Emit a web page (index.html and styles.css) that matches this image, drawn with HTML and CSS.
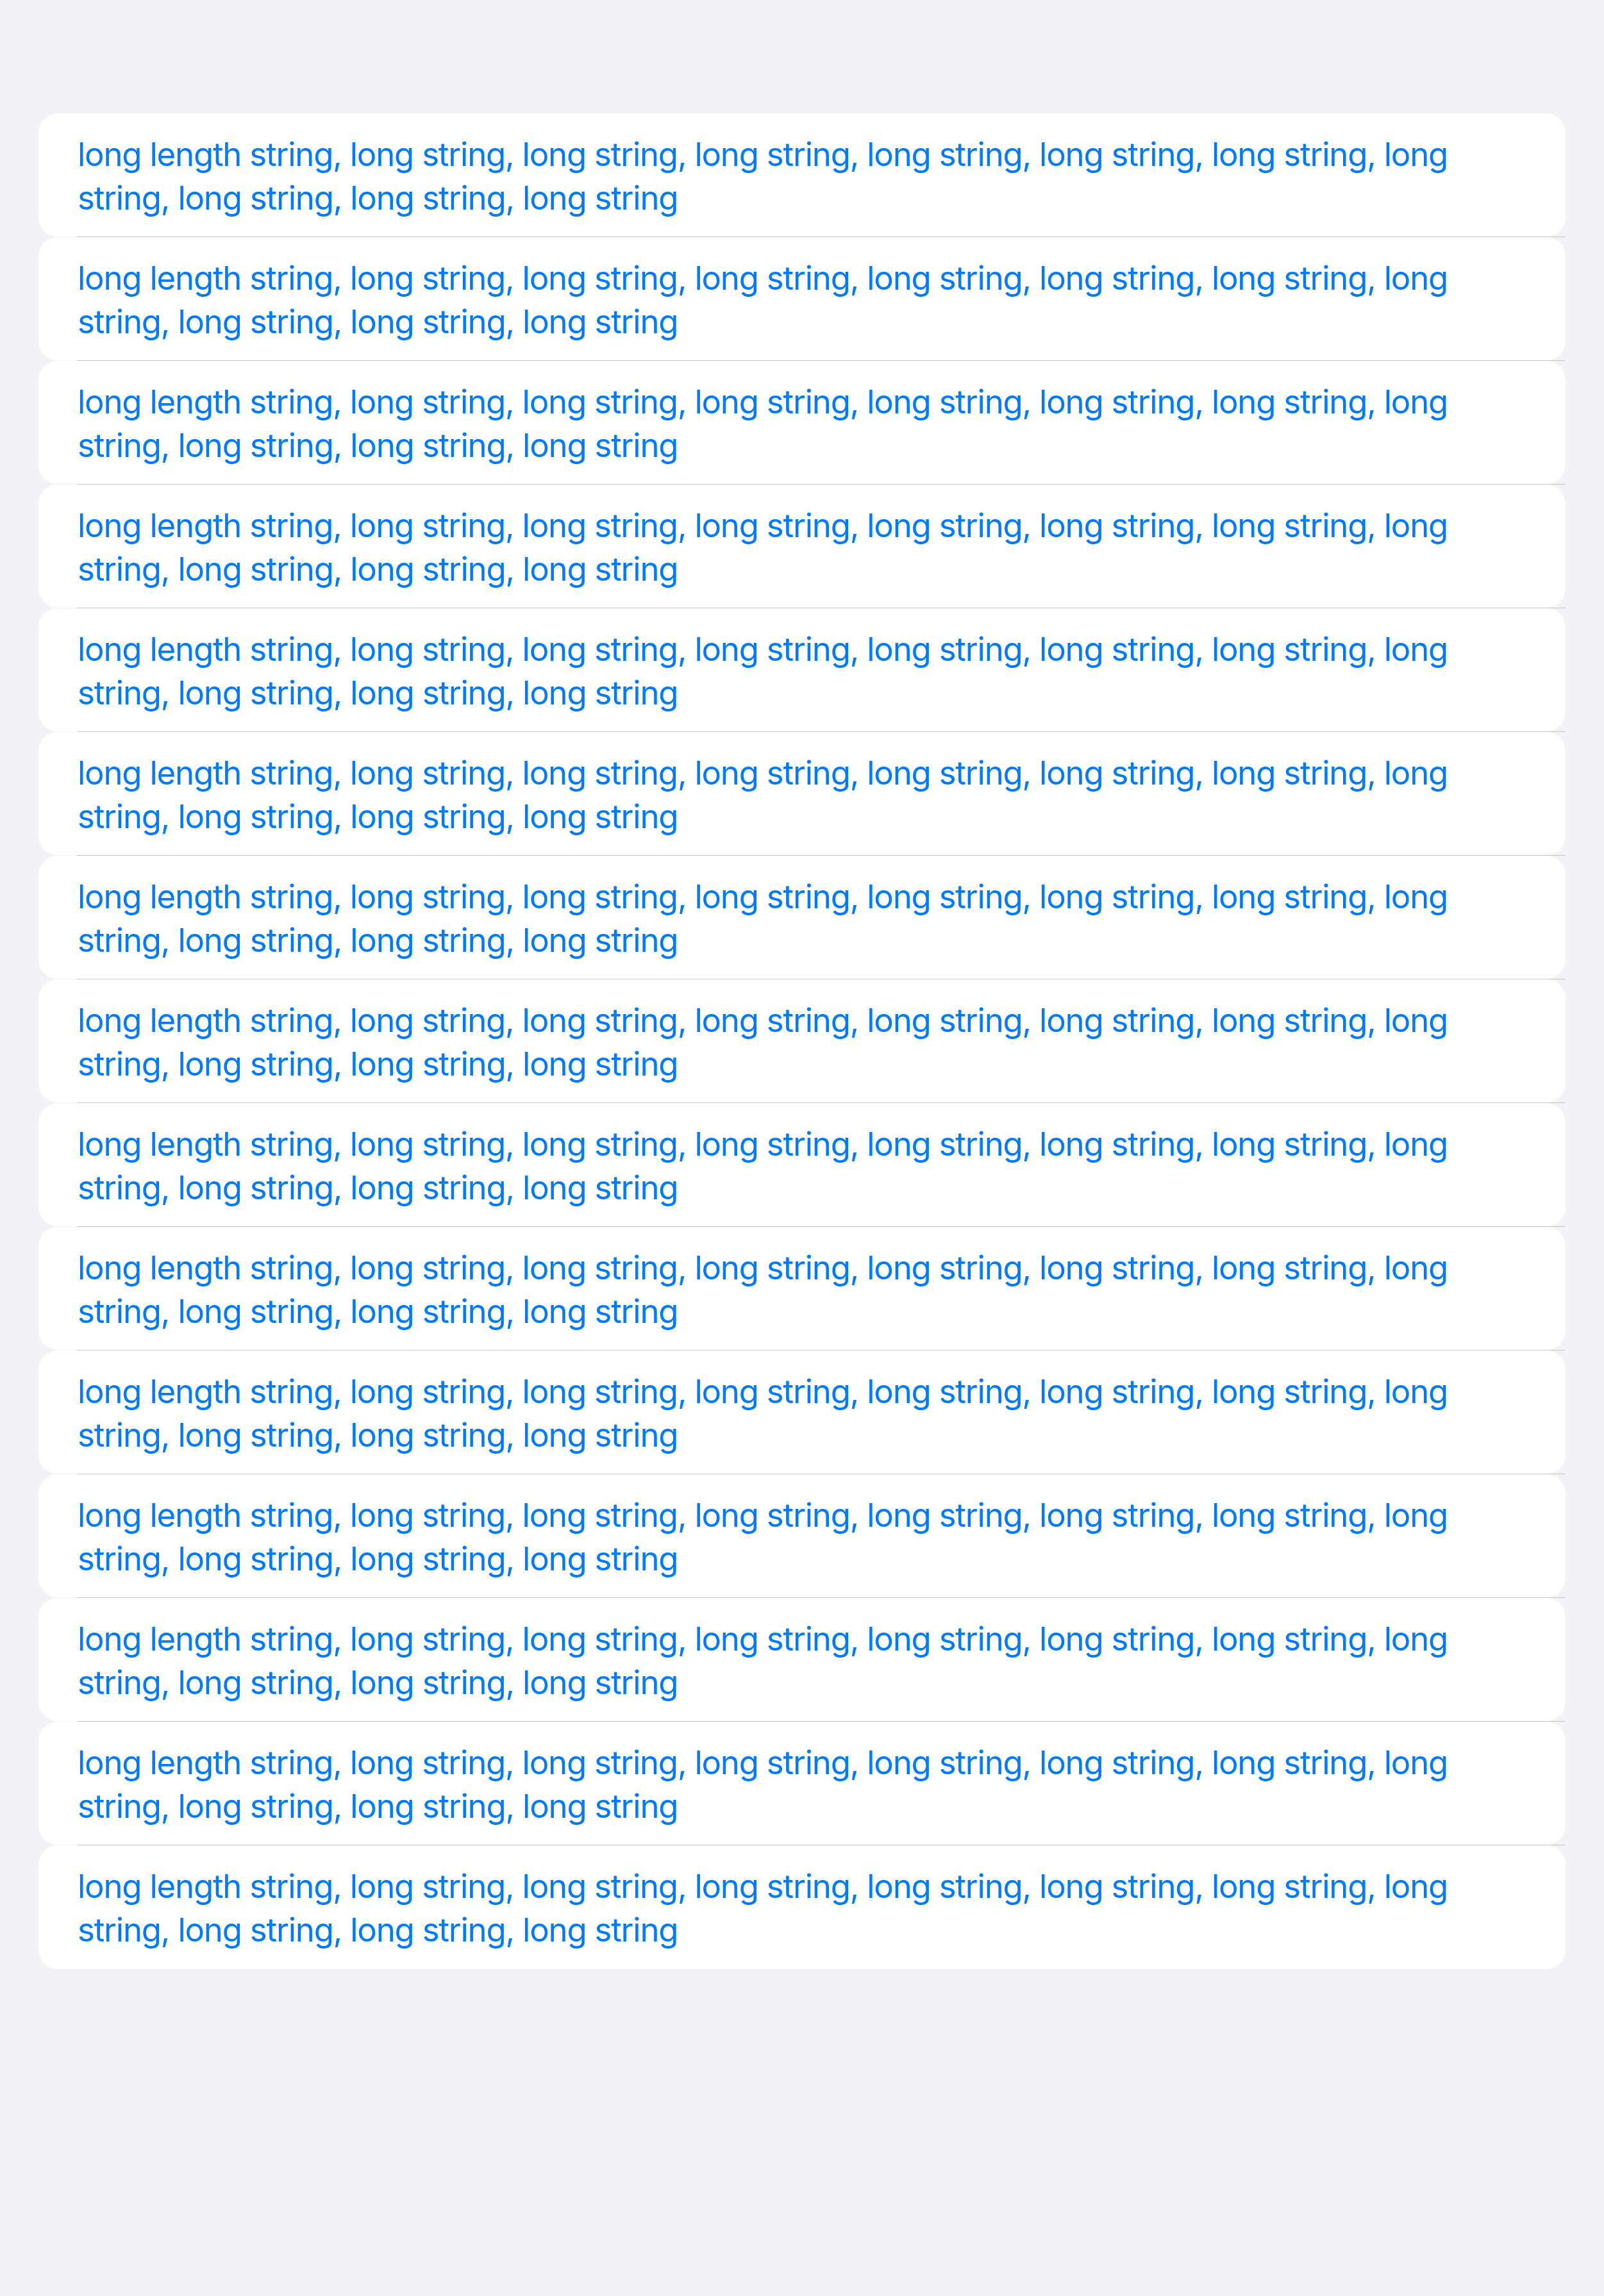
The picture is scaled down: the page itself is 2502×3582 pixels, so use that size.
FILE: index.html
```html
<!DOCTYPE html>
<html lang="en">
<head>
<meta charset="utf-8">
<title>List</title>
<link rel="stylesheet" href="styles.css">
</head>
<body>
<main class="page">
  <ul class="list">
    <li class="row"><p class="label">long length string, long string, long string, long string, long string, long string, long string, long string, long string, long string, long string</p></li>
    <li class="row"><p class="label">long length string, long string, long string, long string, long string, long string, long string, long string, long string, long string, long string</p></li>
    <li class="row"><p class="label">long length string, long string, long string, long string, long string, long string, long string, long string, long string, long string, long string</p></li>
    <li class="row"><p class="label">long length string, long string, long string, long string, long string, long string, long string, long string, long string, long string, long string</p></li>
    <li class="row"><p class="label">long length string, long string, long string, long string, long string, long string, long string, long string, long string, long string, long string</p></li>
    <li class="row"><p class="label">long length string, long string, long string, long string, long string, long string, long string, long string, long string, long string, long string</p></li>
    <li class="row"><p class="label">long length string, long string, long string, long string, long string, long string, long string, long string, long string, long string, long string</p></li>
    <li class="row"><p class="label">long length string, long string, long string, long string, long string, long string, long string, long string, long string, long string, long string</p></li>
    <li class="row"><p class="label">long length string, long string, long string, long string, long string, long string, long string, long string, long string, long string, long string</p></li>
    <li class="row"><p class="label">long length string, long string, long string, long string, long string, long string, long string, long string, long string, long string, long string</p></li>
    <li class="row"><p class="label">long length string, long string, long string, long string, long string, long string, long string, long string, long string, long string, long string</p></li>
    <li class="row"><p class="label">long length string, long string, long string, long string, long string, long string, long string, long string, long string, long string, long string</p></li>
    <li class="row"><p class="label">long length string, long string, long string, long string, long string, long string, long string, long string, long string, long string, long string</p></li>
    <li class="row"><p class="label">long length string, long string, long string, long string, long string, long string, long string, long string, long string, long string, long string</p></li>
    <li class="row"><p class="label">long length string, long string, long string, long string, long string, long string, long string, long string, long string, long string, long string</p></li>
  </ul>
</main>
</body>
</html>
```

FILE: styles.css
```css
* {
  box-sizing: border-box;
}

html, body {
  margin: 0;
  padding: 0;
  background: #f2f2f7;
}

body {
  min-height: 3582px;
  font-family: Inter, "Noto Sans", sans-serif;
}

.page {
  padding: 177px 60px 0 60px;
}

.list {
  list-style: none;
  margin: 0;
  padding: 0;
  display: flex;
  flex-direction: column;
}

.row {
  height: 193px;
  background: #ffffff;
  border-radius: 30px;
  padding: 30px 120px 0 61px;
  position: relative;
}

.row:not(:last-child) {
  height: 192px;
  margin-bottom: 1px;
}

.row:not(:last-child)::after {
  content: "";
  position: absolute;
  left: 60px;
  right: 0;
  bottom: -1px;
  height: 1px;
  background: #c6c6c8;
}

.label {
  margin: 0;
  color: #007aff;
  font-size: 51px;
  line-height: 68px;
  letter-spacing: -1.25px;
}
```
